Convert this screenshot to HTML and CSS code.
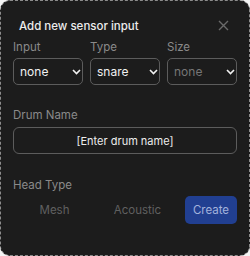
FILE: index.html
```html
<!DOCTYPE html>
<html lang="en">
<head>
    <meta charset="UTF-8">
    <meta name="viewport" content="width=device-width, initial-scale=1.0">
    <title>Add new sensor input</title>
    <link rel="stylesheet" href="styles.css">
</head>
<body>
    <div class="dialog">
        <div class="dialog-header">
            <h2 class="dialog-title">Add new sensor input</h2>
            <button class="close-btn" aria-label="Close">
                <svg width="11" height="11" viewBox="0 0 11 11">
                    <path d="M1 1 L10 10 M10 1 L1 10" stroke="#6a6a6a" stroke-width="1.4" fill="none"/>
                </svg>
            </button>
        </div>

        <div class="field-row">
            <div class="field">
                <label class="label">Input</label>
                <div class="select-wrap">
                    <select class="select">
                        <option>none</option>
                    </select>
                    <svg class="chevron" width="9" height="6" viewBox="0 0 9 6"><path d="M1 1 L4.5 4.5 L8 1" stroke="#f2f2f2" stroke-width="1.6" fill="none"/></svg>
                </div>
            </div>
            <div class="field">
                <label class="label">Type</label>
                <div class="select-wrap">
                    <select class="select">
                        <option>snare</option>
                    </select>
                    <svg class="chevron" width="9" height="6" viewBox="0 0 9 6"><path d="M1 1 L4.5 4.5 L8 1" stroke="#f2f2f2" stroke-width="1.6" fill="none"/></svg>
                </div>
            </div>
            <div class="field">
                <label class="label">Size</label>
                <div class="select-wrap">
                    <select class="select" disabled>
                        <option>none</option>
                    </select>
                    <svg class="chevron" width="9" height="6" viewBox="0 0 9 6"><path d="M1 1 L4.5 4.5 L8 1" stroke="#f2f2f2" stroke-width="1.6" fill="none"/></svg>
                </div>
            </div>
        </div>

        <div class="section">
            <label class="label label-section">Drum Name</label>
            <input class="text-input" type="text" placeholder="[Enter drum name]">
        </div>

        <div class="section">
            <label class="label">Head Type</label>
            <div class="action-row">
                <div class="toggle-group">
                    <button class="toggle">Mesh</button>
                    <button class="toggle">Acoustic</button>
                </div>
                <button class="create-btn">Create</button>
            </div>
        </div>
    </div>
</body>
</html>
```

FILE: styles.css
```css
html, body {
    margin: 0;
    padding: 0;
    background: #f4f4f4;
    font-family: Inter, "Noto Sans", sans-serif;
}
.dialog {
    width: 250px;
    height: 256px;
    box-sizing: border-box;
    border: 1px dashed #8c8c8c;
    border-radius: 10px;
    background: #1c1c1c;
    padding: 0 12px;
}
.dialog-header {
    display: flex;
    justify-content: space-between;
    align-items: center;
    padding: 18px 8px 0 6px;
    height: 14px;
}
.dialog-title {
    margin: 0;
    font-size: 11.5px;
    line-height: 14px;
    font-weight: 500;
    color: #ececec;
}
.close-btn {
    background: none;
    border: none;
    padding: 0;
    margin-top: -2px;
    width: 11px;
    height: 11px;
    display: flex;
}
.label {
    display: block;
    font-size: 11.5px;
    line-height: 14px;
    color: #8a8a8a;
    margin-bottom: 4px;
}
.label-section {
    margin-bottom: 5px;
}
.field-row {
    display: grid;
    grid-template-columns: repeat(3, 1fr);
    gap: 7px;
    margin-top: 7px;
}
.select-wrap {
    position: relative;
}
.select {
    appearance: none;
    display: block;
    width: 100%;
    height: 27px;
    box-sizing: border-box;
    background: #1c1c1c;
    border: 1px solid #5c5c5c;
    border-radius: 5px;
    color: #f2f2f2;
    font-family: inherit;
    font-size: 12px;
    padding: 0 0 0 6px;
}
.select:disabled {
    color: #767676;
    opacity: 1;
}
.chevron {
    position: absolute;
    right: 2px;
    top: 11px;
    pointer-events: none;
}
.section {
    margin-top: 23px;
}
.section + .section {
    margin-top: 24px;
}
.text-input {
    display: block;
    width: 100%;
    height: 27px;
    box-sizing: border-box;
    background: #1c1c1c;
    border: 1px solid #5c5c5c;
    border-radius: 6px;
    color: #f2f2f2;
    font-family: inherit;
    font-size: 11px;
    text-align: center;
}
.text-input::placeholder {
    color: #ececec;
}
.action-row {
    display: flex;
    gap: 6px;
}
.toggle-group {
    flex: 1;
    display: flex;
}
.toggle {
    flex: 1;
    background: none;
    border: none;
    color: #606060;
    font-family: inherit;
    font-size: 11.5px;
    padding: 0;
}
.create-btn {
    width: 52px;
    height: 28px;
    background: #213f91;
    border: none;
    border-radius: 5px;
    color: #a3b2dc;
    font-family: inherit;
    font-size: 11.5px;
    padding: 0;
}
```
